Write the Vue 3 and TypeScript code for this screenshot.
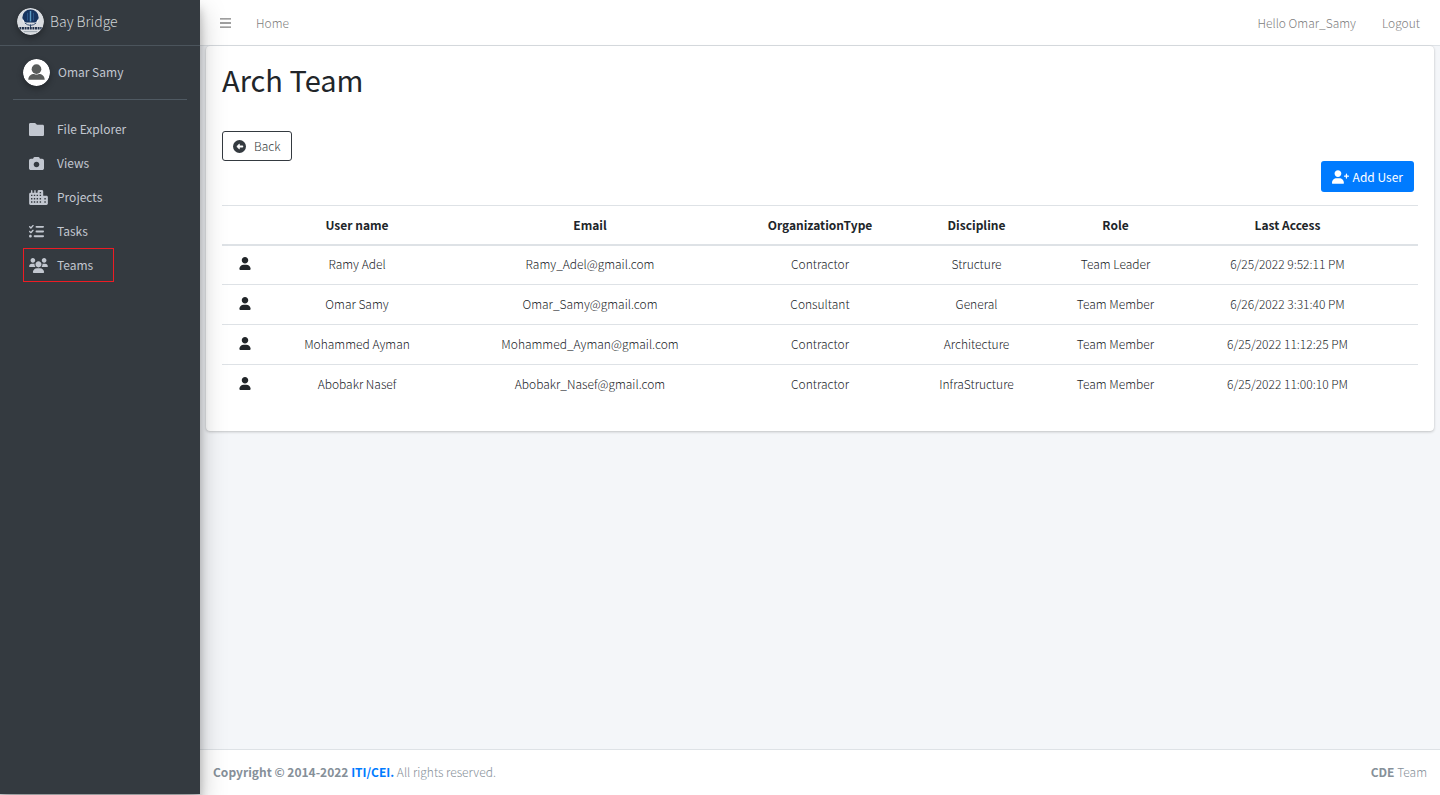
<script setup lang="ts">
interface Member {
  name: string
  email: string
  organization: string
  discipline: string
  role: string
  lastAccess: string
}

interface NavItem {
  label: string
  viewBox: string
  path: string
  wide?: boolean
  marked?: boolean
}

const members: Member[] = [
  { name: 'Ramy Adel', email: 'Ramy_Adel@gmail.com', organization: 'Contractor', discipline: 'Structure', role: 'Team Leader', lastAccess: '6/25/2022 9:52:11 PM' },
  { name: 'Omar Samy', email: 'Omar_Samy@gmail.com', organization: 'Consultant', discipline: 'General', role: 'Team Member', lastAccess: '6/26/2022 3:31:40 PM' },
  { name: 'Mohammed Ayman', email: 'Mohammed_Ayman@gmail.com', organization: 'Contractor', discipline: 'Architecture', role: 'Team Member', lastAccess: '6/25/2022 11:12:25 PM' },
  { name: 'Abobakr Nasef', email: 'Abobakr_Nasef@gmail.com', organization: 'Contractor', discipline: 'InfraStructure', role: 'Team Member', lastAccess: '6/25/2022 11:00:10 PM' },
]

const columns: string[] = ['User name', 'Email', 'OrganizationType', 'Discipline', 'Role', 'Last Access']

const navItems: NavItem[] = [
  {
    label: 'File Explorer',
    viewBox: '0 0 512 512',
    path: 'M512 144v288c0 26.500-21.500 48-48 48h-416C21.500 480 0 458.500 0 432v-352C0 53.500 21.500 32 48 32h160l64 64h192C490.500 96 512 117.500 512 144z',
  },
  {
    label: 'Views',
    viewBox: '0 0 512 512',
    path: 'M194.600 32H317.400C338.100 32 356.400 45.220 362.900 64.820L373.300 96H448C483.300 96 512 124.700 512 160V416C512 451.300 483.300 480 448 480H64C28.650 480 0 451.300 0 416V160C0 124.700 28.650 96 64 96H138.700L149.100 64.820C155.600 45.220 173.900 32 194.600 32H194.600zM256 384C309 384 352 341 352 288C352 234.100 309 192 256 192C202.100 192 160 234.100 160 288C160 341 202.100 384 256 384z',
  },
  {
    label: 'Projects',
    viewBox: '0 0 640 512',
    wide: true,
    path: 'M480 192H592C618.500 192 640 213.500 640 240V464C640 490.500 618.500 512 592 512H48C21.490 512 0 490.500 0 464V144C0 117.500 21.490 96 48 96H64V24C64 10.750 74.750 0 88 0C101.300 0 112 10.750 112 24V96H176V24C176 10.750 186.700 0 200 0C213.300 0 224 10.750 224 24V96H288V48C288 21.490 309.500 0 336 0H432C458.500 0 480 21.490 480 48V192zM64 160V208H112V160H64zM160 160V208H208V160H160zM256 160V208H304V160H256zM64 272V320H112V272H64zM160 272V320H208V272H160zM256 272V320H304V272H256zM64 384V432H112V384H64zM160 384V432H208V384H160zM256 384V432H304V384H256zM360 64V112H408V64H360zM360 160V208H408V160H360zM360 272V320H408V272H360zM360 384V432H408V384H360zM520 272V320H568V272H520zM520 384V432H568V384H520z',
  },
  {
    label: 'Tasks',
    viewBox: '0 0 512 512',
    path: 'M152.100 38.160C161.900 47.030 162.700 62.200 153.800 72.060L81.840 152.100C77.430 156.900 71.210 159.800 64.630 159.100C58.050 160.200 51.690 157.600 47.030 152.100L7.029 112.100C-2.343 103.600-2.343 88.400 7.029 79.030C16.400 69.660 31.600 69.660 40.970 79.030L63.080 101.100L118.200 39.940C127 30.090 142.200 29.290 152.100 38.160zM152.100 198.200C161.900 207 162.700 222.200 153.800 232.100L81.840 312.100C77.430 316.900 71.210 319.800 64.630 319.100C58.050 320.200 51.690 317.600 47.030 312.100L7.029 272.100C-2.343 263.600-2.343 248.400 7.029 239C16.400 229.700 31.600 229.700 40.970 239L63.080 261.100L118.200 199.900C127 190.100 142.200 189.300 152.100 198.200zM224 96C224 78.330 238.300 64 256 64H480C497.700 64 512 78.330 512 96C512 113.700 497.700 128 480 128H256C238.300 128 224 113.700 224 96zM224 256C224 238.300 238.300 224 256 224H480C497.700 224 512 238.300 512 256C512 273.700 497.700 288 480 288H256C238.300 288 224 273.700 224 256zM160 416C160 398.300 174.300 384 192 384H480C497.700 384 512 398.300 512 416C512 433.700 497.700 448 480 448H192C174.300 448 160 433.700 160 416zM0 416C0 389.500 21.490 368 48 368C74.510 368 96 389.500 96 416C96 442.500 74.510 464 48 464C21.490 464 0 442.500 0 416z',
  },
  {
    label: 'Teams',
    viewBox: '0 0 640 512',
    wide: true,
    marked: true,
    path: 'M319.900 320c57.410 0 103.100-46.560 103.100-104c0-57.440-46.540-104-103.100-104c-57.410 0-103.100 46.560-103.100 104C215.900 273.400 262.500 320 319.900 320zM369.900 352H270.100C191.600 352 128 411.700 128 485.300C128 500.100 140.700 512 156.400 512h327.200C499.300 512 512 500.100 512 485.300C512 411.700 448.400 352 369.900 352zM512 160c44.180 0 80-35.820 80-80S556.200 0 512 0c-44.180 0-80 35.820-80 80S467.800 160 512 160zM183.900 216c0-5.449 .9824-10.630 1.609-15.910C174.600 194.100 162.600 192 149.900 192H88.080C39.440 192 0 233.800 0 285.300C0 295.600 7.887 304 17.620 304h199.500C196.700 280.200 183.900 249.700 183.900 216zM128 160c44.180 0 80-35.820 80-80S172.200 0 128 0C83.820 0 48 35.820 48 80S83.820 160 128 160zM551.900 192h-61.840c-12.800 0-24.880 3.037-35.860 8.240C454.800 205.500 455.800 210.600 455.800 216c0 33.710-12.780 64.210-33.160 88h199.700C632.100 304 640 295.600 640 285.300C640 233.800 600.600 192 551.900 192z',
  },
]
</script>

<template>
  <div class="layout">
    <aside class="sidebar">
      <a class="brand" href="#">
        <svg class="badge" viewBox="0 0 28 28" aria-hidden="true">
          <circle cx="14" cy="14" r="14" fill="#d9dce0" />
          <path d="M5.500 10a8.500 8.500 0 0 1 17 0q-1 4-4 5h-9q-3-1-4-5z" fill="#17345f" />
          <path d="M11 5v8M17 5v8" stroke="#2c5c8c" stroke-width="1" />
          <path d="M14 3v11" stroke="#5b9bc4" stroke-width="1.500" />
          <path d="M6 12q1.500 5.500 8 5.500t8-5.500" fill="none" stroke="#f2f4f6" stroke-width="1.200" />
          <path d="M8 15.500q6 5 12 0M14 17v3" fill="none" stroke="#2a4468" stroke-width="1" />
          <path d="M2.500 21h23" stroke="#20304a" stroke-width="2.500" stroke-dasharray="2 .7" />
          <path d="M7 24.500h14" stroke="#9aa3ad" stroke-width="1" />
        </svg>
        <span>Bay Bridge</span>
      </a>
      <div class="account">
        <svg class="badge" viewBox="0 0 28 28" aria-hidden="true">
          <circle cx="14" cy="14" r="14" fill="#fff" />
          <circle cx="14" cy="10.500" r="5" fill="#595c5b" />
          <path d="M5.500 21.500c0-4 3-6 6-6q2.500 1.300 5 0c3 0 6 2 6 6z" fill="#595c5b" />
        </svg>
        <a href="#">Omar Samy</a>
      </div>
      <nav class="menu">
        <a v-for="item in navItems" :key="item.label" href="#" :class="['entry', { marked: item.marked }]">
          <span class="slot">
            <svg :class="{ wide: item.wide }" :viewBox="item.viewBox" aria-hidden="true">
              <path :d="item.path" fill="currentColor" fill-rule="evenodd" />
            </svg>
          </span>
          <span>{{ item.label }}</span>
        </a>
      </nav>
    </aside>

    <div class="page">
      <header class="topbar">
        <button type="button" class="toggle" aria-label="Toggle menu">
          <svg viewBox="0 0 12 12" aria-hidden="true">
            <path d="M0 1.500h12M0 6h12M0 10.500h12" stroke="currentColor" stroke-width="1.500" />
          </svg>
        </button>
        <a href="#">Home</a>
        <a class="hello" href="#">Hello Omar_Samy</a>
        <button type="button" class="logout">Logout</button>
      </header>

      <main>
        <section class="card">
          <h1>Arch Team</h1>
          <a class="back" href="#">
            <svg viewBox="0 0 512 512" aria-hidden="true">
              <circle cx="256" cy="256" r="256" fill="currentColor" />
              <path d="M370 256H250" stroke="#fff" stroke-width="70" stroke-linecap="round" />
              <path d="M250 160L150 256l100 96z" fill="#fff" stroke="#fff" stroke-width="30" stroke-linejoin="round" />
            </svg>
            <span>Back</span>
          </a>
          <div class="actions">
            <button type="button" class="add">
              <svg viewBox="0 0 640 512" aria-hidden="true">
                <path d="M224 256c70.700 0 128-57.310 128-128S294.700 0 224 0C153.300 0 96 57.310 96 128S153.300 256 224 256zM274.700 304H173.300C77.610 304 0 381.600 0 477.300C0 496.500 15.520 512 34.660 512h378.700C432.500 512 448 496.500 448 477.300C448 381.600 370.400 304 274.700 304zM616 200h-48v-48C568 138.800 557.300 128 544 128s-24 10.750-24 24v48h-48C458.800 200 448 210.800 448 224s10.750 24 24 24h48v48C520 309.300 530.800 320 544 320s24-10.750 24-24v-48h48C629.300 248 640 237.300 640 224S629.300 200 616 200z" fill="currentColor" />
              </svg>
              <span>Add User</span>
            </button>
          </div>
          <table>
            <colgroup>
              <col class="c-icon" /><col class="c-name" /><col class="c-email" /><col class="c-org" />
              <col class="c-disc" /><col class="c-role" /><col class="c-last" /><col class="c-end" />
            </colgroup>
            <thead>
              <tr>
                <th></th>
                <th v-for="column in columns" :key="column" scope="col">{{ column }}</th>
                <th></th>
              </tr>
            </thead>
            <tbody>
              <tr v-for="member in members" :key="member.email">
                <td>
                  <svg class="person" viewBox="0 0 448 512" aria-hidden="true">
                    <path d="M224 256c70.700 0 128-57.310 128-128s-57.300-128-128-128C153.300 0 96 57.310 96 128S153.300 256 224 256zM274.700 304H173.300C77.610 304 0 381.600 0 477.300C0 496.500 15.520 512 34.660 512h378.700C432.500 512 448 496.500 448 477.300C448 381.600 370.400 304 274.700 304z" fill="currentColor" />
                  </svg>
                </td>
                <td>{{ member.name }}</td>
                <td>{{ member.email }}</td>
                <td>{{ member.organization }}</td>
                <td>{{ member.discipline }}</td>
                <td>{{ member.role }}</td>
                <td>{{ member.lastAccess }}</td>
                <td></td>
              </tr>
            </tbody>
          </table>
        </section>
      </main>

      <footer>
        <div><strong>Copyright © 2014-2022 <a href="#">ITI/CEI.</a></strong> All rights reserved.</div>
        <div><strong>CDE</strong> Team</div>
      </footer>
    </div>
  </div>
</template>

<style>
body {
  margin: 0;
}
</style>

<style scoped>
.layout {
  display: flex;
  min-height: 100vh;
  background: #f4f6f9;
  color: #212529;
  font-family: "Noto Sans CJK SC", "Open Sans", sans-serif;
  font-size: 12px;
  line-height: 20px;
}
.layout *,
.layout {
  box-sizing: border-box;
}
a {
  color: inherit;
  text-decoration: none;
}
button {
  font: inherit;
  cursor: pointer;
}
svg {
  display: block;
}

.sidebar {
  flex: 0 0 200px;
  position: relative;
  z-index: 1;
  margin-bottom: 1px;
  background: #343a40;
  color: #c2c7d0;
  box-shadow: 0 12px 25px rgba(0, 0, 0, 0.25), 0 9px 9px rgba(0, 0, 0, 0.22);
}
.brand {
  display: flex;
  align-items: center;
  gap: 6px;
  height: 46px;
  padding: 0 17px 3px;
  border-bottom: 1px solid #4b545c;
  color: #d0d3d6;
  font-size: 14px;
  font-weight: 300;
}
.badge {
  width: 27px;
  height: 27px;
  border-radius: 50%;
  box-shadow: 0 3px 6px rgba(0, 0, 0, 0.3);
}
.account {
  display: flex;
  align-items: center;
  gap: 8px;
  height: 54px;
  margin: 0 13px;
  padding: 0 10px 1px;
  border-bottom: 1px solid #4f5962;
}
.menu {
  display: flex;
  flex-direction: column;
  align-items: flex-start;
  padding: 12px 23px;
}
.entry {
  display: flex;
  align-items: center;
  gap: 8px;
  height: 34px;
  padding: 0 21px 0 6px;
}
.marked {
  padding: 0 20px 0 5px;
  border: 1px solid #ed1c24;
}
.slot {
  display: flex;
  width: 20px;
}
.menu svg {
  width: 15px;
  height: 15px;
}
.menu svg.wide {
  width: 19px;
}

.page {
  flex: 1;
  min-width: 0;
  display: flex;
  flex-direction: column;
}
.topbar {
  display: flex;
  align-items: center;
  height: 46px;
  padding: 0 20px;
  border-bottom: 1px solid #dee2e6;
  background: #fff;
  color: #808080;
  font-weight: 300;
}
.topbar button {
  padding: 0;
  border: 0;
  background: none;
  color: inherit;
}
.toggle {
  margin-right: 25px;
}
.toggle svg {
  width: 11px;
  height: 12px;
}
.hello {
  margin-left: auto;
}
.topbar .logout {
  margin-left: 26px;
}

main {
  flex: 1;
  padding: 0 6px;
}
.card {
  padding: 14px 16px 27px;
  border-radius: 4px;
  background: #fff;
  box-shadow: 0 0 1px rgba(0, 0, 0, 0.13), 0 1px 3px rgba(0, 0, 0, 0.2);
}
h1 {
  margin: 0 0 33px;
  font-size: 29px;
  font-weight: 400;
  line-height: 38px;
}
.back {
  display: inline-flex;
  align-items: center;
  gap: 8px;
  height: 30px;
  padding: 0 10px;
  border: 1px solid #343a40;
  border-radius: 3px;
  color: #343a40;
  font-weight: 300;
  vertical-align: top;
}
.back svg {
  width: 13px;
  height: 13px;
}
.actions {
  display: flex;
  justify-content: flex-end;
  padding: 0 4px 13px;
}
.add {
  display: flex;
  align-items: center;
  gap: 4px;
  height: 31px;
  padding: 0 11px;
  border: 0;
  border-radius: 3px;
  background: #007bff;
  color: #fff;
  font-weight: 400;
}
.add svg {
  width: 17px;
  height: 14px;
}

table {
  width: 100%;
  table-layout: fixed;
  border-collapse: separate;
  border-spacing: 0;
}
.c-icon { width: 46px; }
.c-name { width: 178px; }
.c-email { width: 288px; }
.c-org { width: 172px; }
.c-disc { width: 141px; }
.c-role { width: 137px; }
.c-last { width: 207px; }
.c-end { width: 27px; }
th {
  padding: 10px 0;
  border-top: 1px solid #dee2e6;
  border-bottom: 2px solid #dee2e6;
  line-height: 18px;
  text-align: center;
}
td {
  padding: 9px 0 11px;
  border-top: 1px solid #dee2e6;
  font-weight: 300;
  line-height: 19px;
  text-align: center;
}
tbody tr:first-child td {
  padding-top: 8px;
  border-top: 0;
}
.person {
  width: 12px;
  height: 13px;
  margin: 0 auto;
}

footer {
  display: flex;
  justify-content: space-between;
  padding: 12px 13px 13px;
  border-top: 1px solid #dee2e6;
  background: #fff;
  color: #869099;
  font-weight: 300;
}
footer strong {
  font-weight: 700;
}
footer a {
  color: #007bff;
}
</style>
